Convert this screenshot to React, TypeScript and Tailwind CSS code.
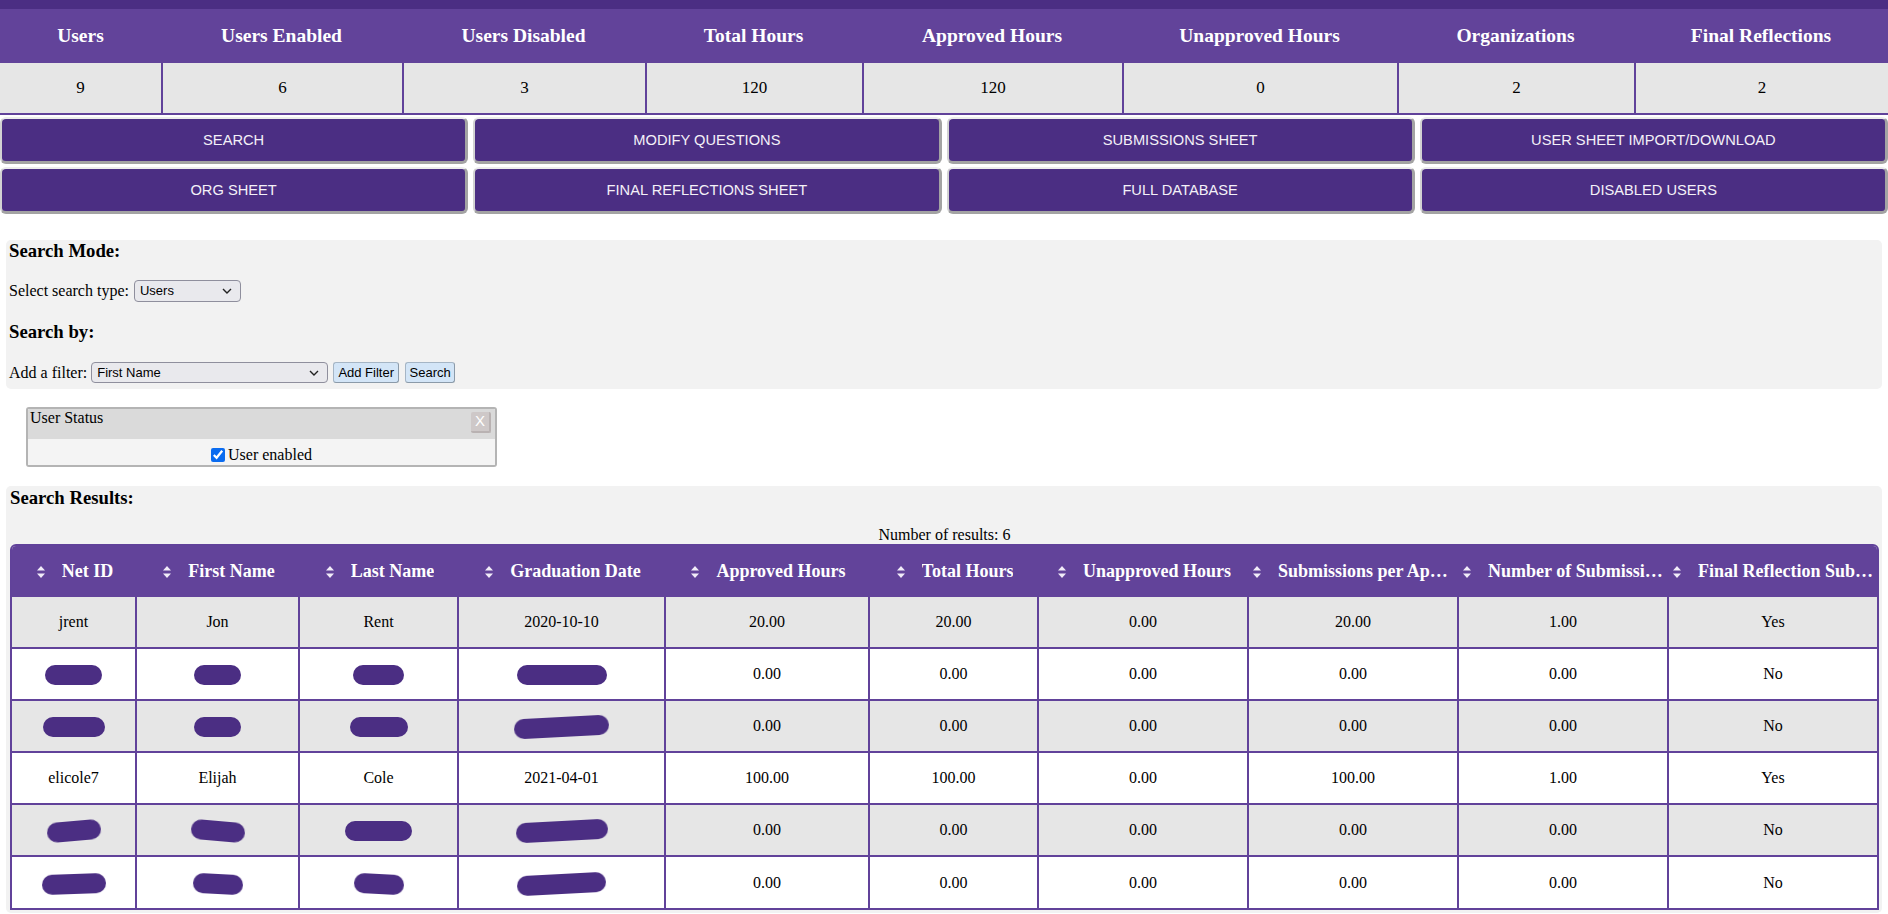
import type { CSSProperties } from 'react'

const stats = [
  { label: 'Users', value: '9' },
  { label: 'Users Enabled', value: '6' },
  { label: 'Users Disabled', value: '3' },
  { label: 'Total Hours', value: '120' },
  { label: 'Approved Hours', value: '120' },
  { label: 'Unapproved Hours', value: '0' },
  { label: 'Organizations', value: '2' },
  { label: 'Final Reflections', value: '2' },
]

const actions = [
  'SEARCH',
  'MODIFY QUESTIONS',
  'SUBMISSIONS SHEET',
  'USER SHEET IMPORT/DOWNLOAD',
  'ORG SHEET',
  'FINAL REFLECTIONS SHEET',
  'FULL DATABASE',
  'DISABLED USERS',
]

const columns = [
  { label: 'Net ID', width: 125 },
  { label: 'First Name', width: 163 },
  { label: 'Last Name', width: 159 },
  { label: 'Graduation Date', width: 207 },
  { label: 'Approved Hours', width: 204 },
  { label: 'Total Hours', width: 169 },
  { label: 'Unapproved Hours', width: 210 },
  { label: 'Submissions per Approved Hour', width: 210 },
  { label: 'Number of Submissions', width: 210 },
  { label: 'Final Reflection Submitted', width: 208 },
]

// [width, rotation] for redacted blobs
type Blob = [number, number]

type Row = {
  ident?: string[]
  redact?: Blob[]
  nums: string[]
}

const rows: Row[] = [
  { ident: ['jrent', 'Jon', 'Rent', '2020-10-10'], nums: ['20.00', '20.00', '0.00', '20.00', '1.00', 'Yes'] },
  { redact: [[57, 0], [47, 0], [51, 0], [90, 0]], nums: ['0.00', '0.00', '0.00', '0.00', '0.00', 'No'] },
  { redact: [[62, 0], [47, 0], [58, 0], [95, -3]], nums: ['0.00', '0.00', '0.00', '0.00', '0.00', 'No'] },
  { ident: ['elicole7', 'Elijah', 'Cole', '2021-04-01'], nums: ['100.00', '100.00', '0.00', '100.00', '1.00', 'Yes'] },
  { redact: [[54, -5], [54, 5], [67, 0], [92, -3]], nums: ['0.00', '0.00', '0.00', '0.00', '0.00', 'No'] },
  { redact: [[64, -2], [50, 3], [50, 3], [89, -3]], nums: ['0.00', '0.00', '0.00', '0.00', '0.00', 'No'] },
]

function SortIcon() {
  return (
    <svg width="10" height="16" viewBox="0 0 10 16" className="shrink-0" aria-hidden>
      <polygon points="1,6.5 5,2 9,6.5" fill="#f1ecf8" />
      <polygon points="1,9.5 5,14 9,9.5" fill="#f1ecf8" />
    </svg>
  )
}

function Chevron() {
  return (
    <svg width="10" height="6" viewBox="0 0 10 6" aria-hidden className="pointer-events-none absolute right-[8px] top-1/2 -translate-y-1/2">
      <path d="M1 1l4 4 4-4" fill="none" stroke="#222" strokeWidth="1.4" />
    </svg>
  )
}

function Redacted({ width, rotate }: { width: number; rotate: number }) {
  const style: CSSProperties = { width, transform: `rotate(${rotate}deg)` }
  return <span className="inline-block h-[20px] rounded-full bg-[#4b2e83] align-middle blur-[0.4px]" style={style} />
}

function FakeSelect({ value, className }: { value: string; className: string }) {
  return (
    <span className={`relative inline-flex items-center rounded-[4px] border border-[#8f8f9d] bg-[#e9e9ed] pl-[5px] align-middle font-['Liberation_Sans',Arial,sans-serif] text-[13px] text-black ${className}`}>
      {value}
      <Chevron />
    </span>
  )
}

function SmallButton({ children, className }: { children: string; className: string }) {
  return (
    <button
      type="button"
      className={`inline-flex h-[21px] items-center justify-center rounded-[3px] border border-[#a5b5c5] border-b-[#8b9aa9] border-r-[#8b9aa9] bg-[#d3e5f7] align-middle font-['Liberation_Sans',Arial,sans-serif] text-[13px] text-black ${className}`}
    >
      {children}
    </button>
  )
}

export default function App() {
  return (
    <div className="min-h-screen bg-white font-['Liberation_Serif','Times_New_Roman',serif] text-[16px] text-black">
      <div className="h-[9px] bg-[#4b2e83]" />

      {/* summary stats */}
      <div className="grid grid-cols-[161px_241px_243px_217px_260px_275px_237px_1fr] border-b-2 border-[#61429a]">
        {stats.map((s) => (
          <div key={s.label} className="flex h-[54px] items-center justify-center bg-[#62439a] text-[19.5px] font-bold text-white">
            {s.label}
          </div>
        ))}
        {stats.map((s, i) => (
          <div
            key={s.label + '-v'}
            className={`flex h-[50px] items-center justify-center bg-[#e6e6e6] text-[17px] ${i > 0 ? 'border-l-2 border-[#61429a]' : ''}`}
          >
            {s.value}
          </div>
        ))}
      </div>

      {/* admin actions */}
      <div className="mt-[2px] grid grid-cols-4 gap-x-[5px] gap-y-[3px]">
        {actions.map((a) => (
          <button
            key={a}
            type="button"
            className="h-[47px] rounded-[6px] border-2 border-r-[3px] border-b-[3px] border-t-[#ececec] border-l-[#d2d2d2] border-r-[#a3a3a3] border-b-[#a3a3a3] bg-[#4b2e83] font-['Liberation_Sans',Arial,sans-serif] text-[14.67px] text-[#f4f1f8]"
          >
            {a}
          </button>
        ))}
      </div>

      <div className="px-[6px]">
        {/* search form */}
        <div className="mt-[26px] rounded-[5px] bg-[#f2f2f2] px-[3px] pb-[6px]">
          <h3 className="mb-[18px] text-[18.72px] font-bold leading-[22px]">Search Mode:</h3>
          <div className="flex h-[22px] items-center">
            <span>Select search type:</span>
            <FakeSelect value="Users" className="ml-[5px] h-[22px] w-[107px]" />
          </div>
          <h3 className="mt-[19px] mb-[19px] text-[18.72px] font-bold leading-[22px]">Search by:</h3>
          <div className="flex h-[21px] items-center">
            <span>Add a filter:</span>
            <FakeSelect value="First Name" className="ml-[4px] h-[21px] w-[237px]" />
            <SmallButton className="ml-[5px] w-[66px]">Add Filter</SmallButton>
            <SmallButton className="ml-[6px] w-[50px]">Search</SmallButton>
          </div>
        </div>

        {/* active filter */}
        <div className="mt-[18px] ml-[20px] w-[471px] overflow-hidden rounded-[3px] border-2 border-[#b4b4b4]">
          <div className="flex h-[30px] items-start justify-between bg-[#dadada] pl-[2px]">
            <span className="leading-[18px]">User Status</span>
            <span className="mt-[3px] mr-[4px] flex h-[21px] w-[20px] items-center justify-center rounded-[2px] border-r-2 border-b-2 border-[#b9b2b2] bg-[#cec8c8] font-['Liberation_Sans',Arial,sans-serif] text-[15px] text-white">
              X
            </span>
          </div>
          <div className="flex h-[26px] items-center justify-center gap-[3px] bg-[#f4f4f4] pt-[5px]">
            <input type="checkbox" defaultChecked className="h-[14px] w-[14px] accent-[#0b6cf0]" />
            <span>User enabled</span>
          </div>
        </div>

        {/* results */}
        <div className="mt-[19px] rounded-[5px] bg-[#f2f2f2] pt-[1px] pl-[4px] pr-[3px]">
          <h3 className="mb-[17px] text-[18.72px] font-bold leading-[22px]">Search Results:</h3>
          <div className="text-center leading-[18px]">Number of results: 6</div>
          <div className="overflow-hidden rounded-t-[6px] border-2 border-[#61429a]">
            <table className="w-full table-fixed border-separate border-spacing-0">
              <colgroup>
                {columns.map((c, i) => (
                  <col key={c.label} style={i < columns.length - 1 ? { width: c.width } : undefined} />
                ))}
              </colgroup>
              <thead>
                <tr className="bg-[#62439a] text-white">
                  {columns.map((c) => (
                    <th key={c.label} className="h-[51px] px-[3px] text-[18px] font-bold">
                      <div className="flex items-center justify-center gap-[16px]">
                        <SortIcon />
                        <span className="truncate">{c.label}</span>
                      </div>
                    </th>
                  ))}
                </tr>
              </thead>
              <tbody>
                {rows.map((r, ri) => {
                  const last = ri === rows.length - 1
                  const cells = [
                    ...(r.ident
                      ? r.ident.map((t) => <span>{t}</span>)
                      : (r.redact ?? []).map(([w, rot]) => <Redacted width={w} rotate={rot} />)),
                    ...r.nums.map((t) => <span>{t}</span>),
                  ]
                  return (
                    <tr key={ri} className={ri % 2 === 0 ? 'bg-[#e6e6e6]' : 'bg-white'}>
                      {cells.map((content, ci) => (
                        <td
                          key={ci}
                          className={`text-center ${last ? 'h-[51px]' : 'h-[52px] border-b-2'} ${
                            ci < cells.length - 1 ? 'border-r-2' : ''
                          } border-[#61429a]`}
                        >
                          {content}
                        </td>
                      ))}
                    </tr>
                  )
                })}
              </tbody>
            </table>
          </div>
          <div className="h-[3px]" />
        </div>
      </div>
    </div>
  )
}
